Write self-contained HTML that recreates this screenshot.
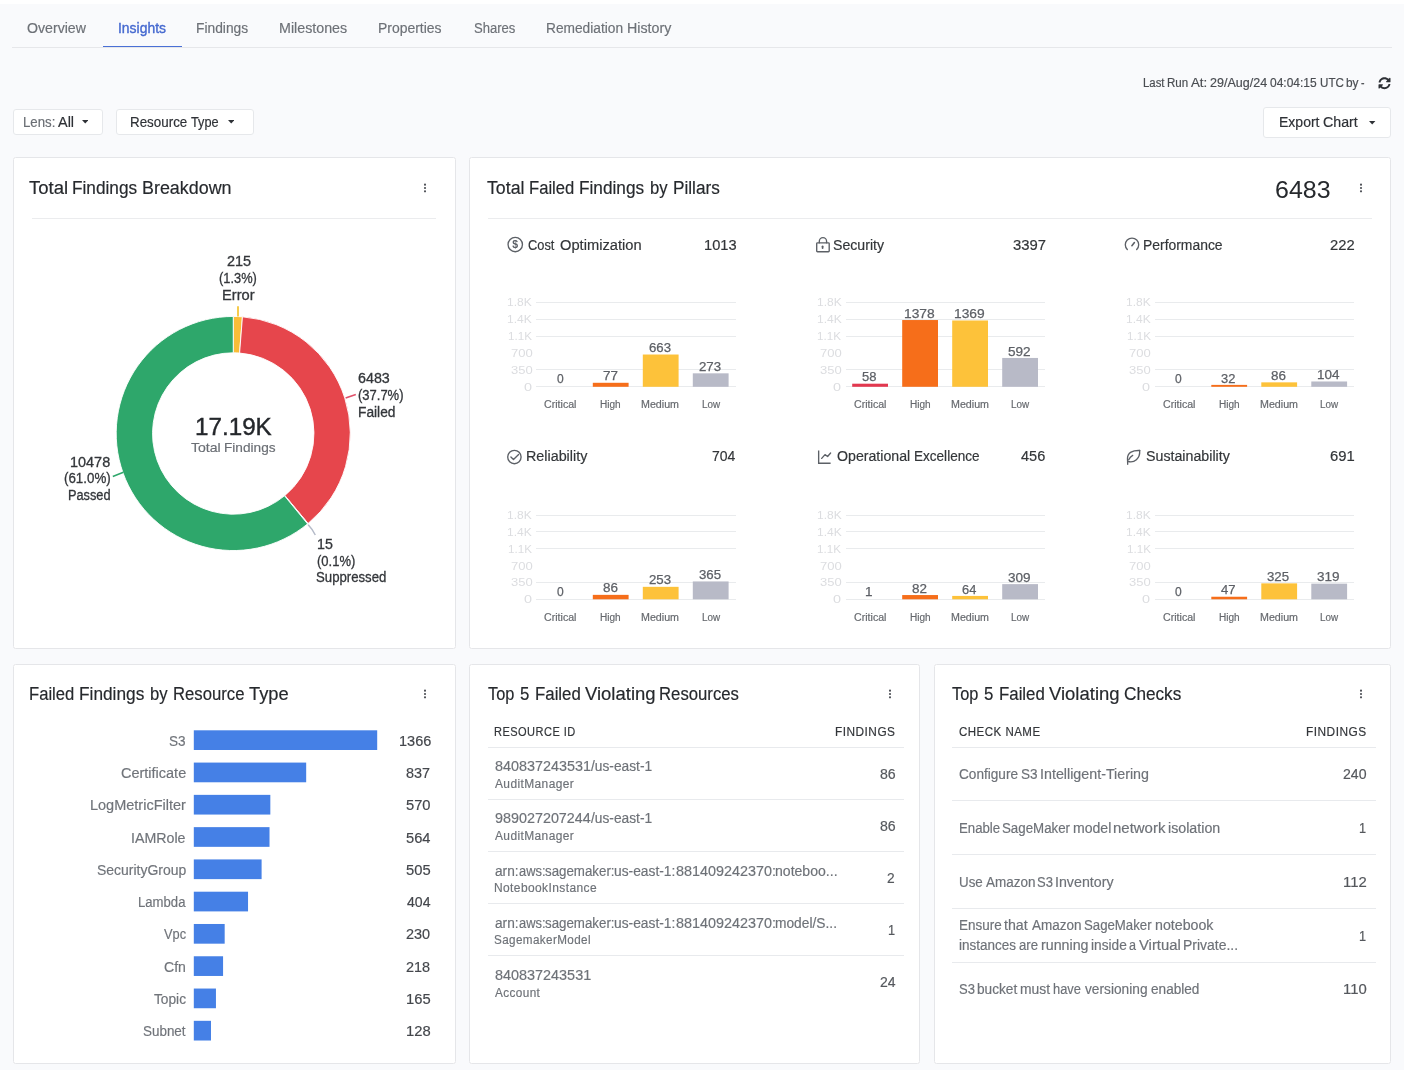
<!DOCTYPE html><html><head><meta charset="utf-8"><title>Insights</title><style>
html,body{margin:0;padding:0}
body{width:1408px;height:1070px;position:relative;overflow:hidden;background:#f9fafc;font-family:"Liberation Sans", sans-serif;}
#w{position:absolute;left:0;top:0;width:1408px;height:1070px;will-change:transform}
#w>div,#w>svg,#w>span{position:absolute;display:block}
span{white-space:pre;line-height:1}
</style></head><body><div id="w">
<div style="left:0.00px;top:0.00px;width:1408.00px;height:4.00px;background:#ffffff;"></div>
<div style="left:1404.00px;top:0.00px;width:4.00px;height:1070.00px;background:#ffffff;"></div>
<div style="left:12.00px;top:47.00px;width:1380.00px;height:1.00px;background:#e6e7ea;"></div>
<div style="left:102.60px;top:45.60px;width:79.40px;height:1.50px;background:#4a70d6;"></div>
<svg style="left:1378.3px;top:77.3px" width="13" height="12.4" viewBox="0 0 512 512"><path fill="#2e3136" d="M370.72 133.28C339.458 104.008 298.888 87.962 255.848 88c-77.458.068-144.328 53.178-162.791 126.85-1.344 5.363-6.122 9.15-11.651 9.15H24.103c-7.498 0-13.194-6.807-11.807-14.176C33.933 94.924 134.813 8 256 8c66.448 0 126.791 26.136 171.315 68.685L463.03 40.97C478.149 25.851 504 36.559 504 57.941V192c0 13.255-10.745 24-24 24H345.941c-21.382 0-32.09-25.851-16.971-40.971l41.75-41.749zM32 296h134.059c21.382 0 32.09 25.851 16.971 40.971l-41.75 41.75c31.262 29.273 71.835 45.319 114.876 45.28 77.418-.07 144.315-53.144 162.787-126.849 1.344-5.363 6.122-9.15 11.651-9.15h57.304c7.498 0 13.194 6.807 11.807 14.176C478.067 417.076 377.187 504 256 504c-66.448 0-126.791-26.136-171.315-68.685L48.97 471.03C33.851 486.149 8 475.441 8 454.059V320c0-13.255 10.745-24 24-24z"/></svg>
<div style="left:13.20px;top:108.50px;width:90.20px;height:26.00px;background:#fff;border:1px solid #e6e8eb;border-radius:3px;box-sizing:border-box;"></div>
<div style="left:115.70px;top:108.50px;width:138.50px;height:26.00px;background:#fff;border:1px solid #e6e8eb;border-radius:3px;box-sizing:border-box;"></div>
<div style="left:1263.30px;top:107.30px;width:127.50px;height:30.40px;background:#fff;border:1px solid #e6e8eb;border-radius:3px;box-sizing:border-box;"></div>
<svg style="left:82.10px;top:120.30px" width="6.4" height="3.6" viewBox="0 0 6.4 3.6"><path d="M0 0H6.4L3.2 3.6Z" fill="#2e3136"/></svg>
<svg style="left:228.10px;top:120.30px" width="6.4" height="3.6" viewBox="0 0 6.4 3.6"><path d="M0 0H6.4L3.2 3.6Z" fill="#2e3136"/></svg>
<svg style="left:1369.40px;top:121.10px" width="6.4" height="3.6" viewBox="0 0 6.4 3.6"><path d="M0 0H6.4L3.2 3.6Z" fill="#2e3136"/></svg>
<div style="left:13.00px;top:157.00px;width:443.00px;height:492.00px;background:#fff;border:1px solid #e5e6e9;border-radius:2.5px;box-sizing:border-box;"></div>
<div style="left:469.00px;top:157.00px;width:922.00px;height:492.00px;background:#fff;border:1px solid #e5e6e9;border-radius:2.5px;box-sizing:border-box;"></div>
<div style="left:13.00px;top:664.00px;width:443.00px;height:400.00px;background:#fff;border:1px solid #e5e6e9;border-radius:2.5px;box-sizing:border-box;"></div>
<div style="left:469.00px;top:664.00px;width:451.00px;height:400.00px;background:#fff;border:1px solid #e5e6e9;border-radius:2.5px;box-sizing:border-box;"></div>
<div style="left:934.00px;top:664.00px;width:457.00px;height:400.00px;background:#fff;border:1px solid #e5e6e9;border-radius:2.5px;box-sizing:border-box;"></div>
<svg style="left:422.00px;top:182.40px" width="6" height="12" viewBox="0 0 6 12"><circle cx="3" cy="2.7" r="1.08" fill="#4d5056"/><circle cx="3" cy="6" r="1.08" fill="#4d5056"/><circle cx="3" cy="9.3" r="1.08" fill="#4d5056"/></svg>
<svg style="left:1358.20px;top:182.40px" width="6" height="12" viewBox="0 0 6 12"><circle cx="3" cy="2.7" r="1.08" fill="#4d5056"/><circle cx="3" cy="6" r="1.08" fill="#4d5056"/><circle cx="3" cy="9.3" r="1.08" fill="#4d5056"/></svg>
<svg style="left:422.00px;top:688.30px" width="6" height="12" viewBox="0 0 6 12"><circle cx="3" cy="2.7" r="1.08" fill="#4d5056"/><circle cx="3" cy="6" r="1.08" fill="#4d5056"/><circle cx="3" cy="9.3" r="1.08" fill="#4d5056"/></svg>
<svg style="left:886.50px;top:688.30px" width="6" height="12" viewBox="0 0 6 12"><circle cx="3" cy="2.7" r="1.08" fill="#4d5056"/><circle cx="3" cy="6" r="1.08" fill="#4d5056"/><circle cx="3" cy="9.3" r="1.08" fill="#4d5056"/></svg>
<svg style="left:1357.80px;top:688.30px" width="6" height="12" viewBox="0 0 6 12"><circle cx="3" cy="2.7" r="1.08" fill="#4d5056"/><circle cx="3" cy="6" r="1.08" fill="#4d5056"/><circle cx="3" cy="9.3" r="1.08" fill="#4d5056"/></svg>
<div style="left:32.00px;top:218.00px;width:404.00px;height:1.00px;background:#ebecee;"></div>
<div style="left:488.00px;top:218.00px;width:884.00px;height:1.00px;background:#ebecee;"></div>
<svg style="left:0;top:0" width="470" height="660" viewBox="0 0 470 660"><path d="M233.25 316.45A117.05 117.05 0 0 1 242.44 316.81L239.58 353.05A80.7 80.7 0 0 0 233.25 352.80Z" fill="#f9bd38" stroke="#fff" stroke-width="0.9" stroke-linejoin="round"/><path d="M242.44 316.81A117.05 117.05 0 0 1 308.07 523.51L284.84 495.56A80.7 80.7 0 0 0 239.58 353.05Z" fill="#e6464c" stroke="#fff" stroke-width="0.9" stroke-linejoin="round"/><path d="M308.07 523.51A117.05 117.05 0 0 1 307.58 523.92L284.50 495.84A80.7 80.7 0 0 0 284.84 495.56Z" fill="#a9b4c9" stroke="#fff" stroke-width="0.9" stroke-linejoin="round"/><path d="M307.58 523.92A117.05 117.05 0 1 1 233.25 316.45L233.25 352.80A80.7 80.7 0 1 0 284.50 495.84Z" fill="#2ea76b" stroke="#fff" stroke-width="0.9" stroke-linejoin="round"/><path d="M238 316.6V306.2" stroke="#f6c944" stroke-width="1.9" fill="none"/><path d="M345.6 398.1L355.8 394.4" stroke="#e0506a" stroke-width="1.6" fill="none"/><path d="M123.4 472.3L112.8 476.6" stroke="#2ea76b" stroke-width="1.6" fill="none"/><path d="M308.2 524.7Q311.8 528.3 315.3 535" stroke="#b4bac8" stroke-width="1.5" fill="none"/></svg>
<div style="left:536.20px;top:301.90px;width:199.50px;height:1.00px;background:#e9ebed;"></div>
<div style="left:536.20px;top:318.78px;width:199.50px;height:1.00px;background:#e9ebed;"></div>
<div style="left:536.20px;top:335.66px;width:199.50px;height:1.00px;background:#e9ebed;"></div>
<div style="left:536.20px;top:369.42px;width:199.50px;height:1.00px;background:#e9ebed;"></div>
<div style="left:536.20px;top:386.30px;width:199.50px;height:1.00px;background:#e9ebed;"></div>
<div style="left:845.60px;top:301.90px;width:199.50px;height:1.00px;background:#e9ebed;"></div>
<div style="left:845.60px;top:318.78px;width:199.50px;height:1.00px;background:#e9ebed;"></div>
<div style="left:845.60px;top:335.66px;width:199.50px;height:1.00px;background:#e9ebed;"></div>
<div style="left:845.60px;top:369.42px;width:199.50px;height:1.00px;background:#e9ebed;"></div>
<div style="left:845.60px;top:386.30px;width:199.50px;height:1.00px;background:#e9ebed;"></div>
<div style="left:1154.70px;top:301.90px;width:199.50px;height:1.00px;background:#e9ebed;"></div>
<div style="left:1154.70px;top:318.78px;width:199.50px;height:1.00px;background:#e9ebed;"></div>
<div style="left:1154.70px;top:335.66px;width:199.50px;height:1.00px;background:#e9ebed;"></div>
<div style="left:1154.70px;top:369.42px;width:199.50px;height:1.00px;background:#e9ebed;"></div>
<div style="left:1154.70px;top:386.30px;width:199.50px;height:1.00px;background:#e9ebed;"></div>
<div style="left:536.20px;top:514.60px;width:199.50px;height:1.00px;background:#e9ebed;"></div>
<div style="left:536.20px;top:531.44px;width:199.50px;height:1.00px;background:#e9ebed;"></div>
<div style="left:536.20px;top:548.28px;width:199.50px;height:1.00px;background:#e9ebed;"></div>
<div style="left:536.20px;top:581.96px;width:199.50px;height:1.00px;background:#e9ebed;"></div>
<div style="left:536.20px;top:598.80px;width:199.50px;height:1.00px;background:#e9ebed;"></div>
<div style="left:845.60px;top:514.60px;width:199.50px;height:1.00px;background:#e9ebed;"></div>
<div style="left:845.60px;top:531.44px;width:199.50px;height:1.00px;background:#e9ebed;"></div>
<div style="left:845.60px;top:548.28px;width:199.50px;height:1.00px;background:#e9ebed;"></div>
<div style="left:845.60px;top:581.96px;width:199.50px;height:1.00px;background:#e9ebed;"></div>
<div style="left:845.60px;top:598.80px;width:199.50px;height:1.00px;background:#e9ebed;"></div>
<div style="left:1154.70px;top:514.60px;width:199.50px;height:1.00px;background:#e9ebed;"></div>
<div style="left:1154.70px;top:531.44px;width:199.50px;height:1.00px;background:#e9ebed;"></div>
<div style="left:1154.70px;top:548.28px;width:199.50px;height:1.00px;background:#e9ebed;"></div>
<div style="left:1154.70px;top:581.96px;width:199.50px;height:1.00px;background:#e9ebed;"></div>
<div style="left:1154.70px;top:598.80px;width:199.50px;height:1.00px;background:#e9ebed;"></div>
<div style="left:487.70px;top:746.60px;width:416.50px;height:1.20px;background:#e8eaed;"></div>
<div style="left:487.70px;top:798.70px;width:416.50px;height:1.20px;background:#e8eaed;"></div>
<div style="left:487.70px;top:850.80px;width:416.50px;height:1.20px;background:#e8eaed;"></div>
<div style="left:487.70px;top:902.80px;width:416.50px;height:1.20px;background:#e8eaed;"></div>
<div style="left:487.70px;top:954.90px;width:416.50px;height:1.20px;background:#e8eaed;"></div>
<div style="left:951.70px;top:746.90px;width:424.00px;height:1.20px;background:#e8eaed;"></div>
<div style="left:951.70px;top:800.10px;width:424.00px;height:1.20px;background:#e8eaed;"></div>
<div style="left:951.70px;top:854.00px;width:424.00px;height:1.20px;background:#e8eaed;"></div>
<div style="left:951.70px;top:907.80px;width:424.00px;height:1.20px;background:#e8eaed;"></div>
<div style="left:951.70px;top:961.60px;width:424.00px;height:1.20px;background:#e8eaed;"></div>
<svg style="left:0;top:0" width="1408" height="1070" viewBox="0 0 1408 1070"><rect x="592.80" y="382.79" width="35.80" height="4.01" fill="#f66e1a"/><rect x="642.80" y="354.52" width="35.80" height="32.28" fill="#fdc23a"/><rect x="692.80" y="373.33" width="35.80" height="13.47" fill="#b8bac7"/><rect x="852.20" y="383.70" width="35.80" height="3.10" fill="#e2384f"/><rect x="902.20" y="320.04" width="35.80" height="66.76" fill="#f66e1a"/><rect x="952.20" y="320.48" width="35.80" height="66.32" fill="#fdc23a"/><rect x="1002.20" y="357.95" width="35.80" height="28.85" fill="#b8bac7"/><rect x="1211.30" y="384.90" width="35.80" height="1.90" fill="#f66e1a"/><rect x="1261.30" y="382.35" width="35.80" height="4.45" fill="#fdc23a"/><rect x="1311.30" y="381.48" width="35.80" height="5.32" fill="#b8bac7"/><rect x="592.80" y="594.86" width="35.80" height="4.44" fill="#f66e1a"/><rect x="642.80" y="586.83" width="35.80" height="12.47" fill="#fdc23a"/><rect x="692.80" y="581.44" width="35.80" height="17.86" fill="#b8bac7"/><rect x="902.20" y="595.05" width="35.80" height="4.25" fill="#f66e1a"/><rect x="952.20" y="595.92" width="35.80" height="3.38" fill="#fdc23a"/><rect x="1002.20" y="584.13" width="35.80" height="15.17" fill="#b8bac7"/><rect x="1211.30" y="596.74" width="35.80" height="2.56" fill="#f66e1a"/><rect x="1261.30" y="583.36" width="35.80" height="15.94" fill="#fdc23a"/><rect x="1311.30" y="583.65" width="35.80" height="15.65" fill="#b8bac7"/><rect x="193.80" y="730.30" width="183.40" height="19.70" fill="#4580e6"/><rect x="193.80" y="762.58" width="112.38" height="19.70" fill="#4580e6"/><rect x="193.80" y="794.86" width="76.53" height="19.70" fill="#4580e6"/><rect x="193.80" y="827.14" width="75.72" height="19.70" fill="#4580e6"/><rect x="193.80" y="859.42" width="67.80" height="19.70" fill="#4580e6"/><rect x="193.80" y="891.70" width="54.24" height="19.70" fill="#4580e6"/><rect x="193.80" y="923.98" width="30.88" height="19.70" fill="#4580e6"/><rect x="193.80" y="956.26" width="29.27" height="19.70" fill="#4580e6"/><rect x="193.80" y="988.54" width="22.15" height="19.70" fill="#4580e6"/><rect x="193.80" y="1020.82" width="17.19" height="19.70" fill="#4580e6"/></svg>
<svg style="left:0;top:0" width="1408" height="1070" viewBox="0 0 1408 1070" fill="none" stroke="#5c6066" stroke-width="1.35" stroke-linecap="round" stroke-linejoin="round"><circle cx="515.25" cy="244.5" r="7.2"/><text x="515.25" y="248.1" text-anchor="middle" font-family='"Liberation Sans", sans-serif' font-size="10.5" font-weight="700" fill="#5c6066" stroke="none">$</text><rect x="816.7" y="242.8" width="12.5" height="8.9" rx="0.8"/><path d="M819.3 242.8V241.2a3.65 3.65 0 0 1 7.3 0V242.8"/><rect x="821.7" y="245.4" width="1.8" height="3.5" rx="0.9" fill="#5c6066" stroke="none"/><path d="M1127.3 249.6A6.7 6.7 0 1 1 1136.7 249.6"/><path d="M1131.9 245.7L1134.4 242.6" stroke-width="1.6"/><circle cx="514.4" cy="457.05" r="6.7"/><path d="M510.9 456.9L513.5 459.5L518.6 454.4"/><path d="M818.65 450.6V463.2H830.6" stroke-linecap="butt" stroke-linejoin="miter"/><path d="M821.7 458.4L825 454.6L827.6 456.5L830.6 453"/><path d="M1139.7 450.5C1133 450.2 1127.3 452.2 1127.5 458.6L1127.7 464.3"/><path d="M1128.2 461.5C1134.2 463 1140.2 459 1139.7 450.5"/><path d="M1128.7 459.7C1129.7 457.6 1131 456.3 1132.7 455.4"/></svg>
<span style="font-size:14px;color:#6d7177;-webkit-text-stroke:0.18px #6d7177;left:27.19px;top:21.00px;transform:scaleX(1.0098);transform-origin:0 0;">Overview</span>
<span style="font-size:14px;color:#4468cf;-webkit-text-stroke:0.35px #4468cf;left:117.74px;top:21.00px;transform:scaleX(0.9942);transform-origin:0 0;">Insights</span>
<span style="font-size:14px;color:#6d7177;-webkit-text-stroke:0.18px #6d7177;left:196.49px;top:21.00px;transform:scaleX(0.9850);transform-origin:0 0;">Findings</span>
<span style="font-size:14px;color:#6d7177;-webkit-text-stroke:0.18px #6d7177;left:279.49px;top:21.00px;transform:scaleX(1.0187);transform-origin:0 0;">Milestones</span>
<span style="font-size:14px;color:#6d7177;-webkit-text-stroke:0.18px #6d7177;left:378.00px;top:21.00px;transform:scaleX(0.9960);transform-origin:0 0;">Properties</span>
<span style="font-size:14px;color:#6d7177;-webkit-text-stroke:0.18px #6d7177;left:473.50px;top:21.00px;transform:scaleX(0.9331);transform-origin:0 0;">Shares</span>
<span style="font-size:14px;color:#6d7177;-webkit-text-stroke:0.18px #6d7177;left:545.80px;top:21.00px;transform:scaleX(0.9807);transform-origin:0 0;">Remediation</span>
<span style="font-size:14px;color:#6d7177;-webkit-text-stroke:0.18px #6d7177;left:626.50px;top:21.00px;transform:scaleX(1.0155);transform-origin:0 0;">History</span>
<span style="font-size:12px;color:#4a4d52;-webkit-text-stroke:0.18px #4a4d52;left:1142.50px;top:77.00px;transform:scaleX(0.9472);transform-origin:0 0;">Last</span>
<span style="font-size:12px;color:#4a4d52;-webkit-text-stroke:0.18px #4a4d52;left:1166.92px;top:77.00px;transform:scaleX(0.9622);transform-origin:0 0;">Run</span>
<span style="font-size:12px;color:#4a4d52;-webkit-text-stroke:0.18px #4a4d52;left:1191.17px;top:77.00px;transform:scaleX(1.1059);transform-origin:0 0;">At:</span>
<span style="font-size:12px;color:#4a4d52;-webkit-text-stroke:0.18px #4a4d52;left:1209.73px;top:77.00px;transform:scaleX(1.0434);transform-origin:0 0;">29/Aug/24</span>
<span style="font-size:12px;color:#4a4d52;-webkit-text-stroke:0.18px #4a4d52;left:1269.81px;top:77.00px;transform:scaleX(0.9976);transform-origin:0 0;">04:04:15</span>
<span style="font-size:12px;color:#4a4d52;-webkit-text-stroke:0.18px #4a4d52;left:1319.50px;top:77.00px;transform:scaleX(0.9671);transform-origin:0 0;">UTC</span>
<span style="font-size:12px;color:#4a4d52;-webkit-text-stroke:0.18px #4a4d52;left:1345.94px;top:77.00px;transform:scaleX(0.9871);transform-origin:0 0;">by</span>
<span style="font-size:12px;color:#4a4d52;-webkit-text-stroke:0.18px #4a4d52;left:1361.34px;top:77.00px;transform:scaleX(0.8754);transform-origin:0 0;">-</span>
<span style="font-size:14px;color:#6a6e74;-webkit-text-stroke:0.18px #6a6e74;left:22.76px;top:115.00px;transform:scaleX(0.9439);transform-origin:0 0;">Lens:</span>
<span style="font-size:14px;color:#2e3136;-webkit-text-stroke:0.18px #2e3136;left:58.22px;top:115.00px;transform:scaleX(1.0329);transform-origin:0 0;">All</span>
<span style="font-size:14px;color:#2e3136;-webkit-text-stroke:0.18px #2e3136;left:130.00px;top:115.00px;transform:scaleX(0.9564);transform-origin:0 0;">Resource</span>
<span style="font-size:14px;color:#2e3136;-webkit-text-stroke:0.18px #2e3136;left:191.18px;top:115.00px;transform:scaleX(0.9086);transform-origin:0 0;">Type</span>
<span style="font-size:14px;color:#2e3136;-webkit-text-stroke:0.18px #2e3136;left:1278.80px;top:115.00px;transform:scaleX(1.0013);transform-origin:0 0;">Export</span>
<span style="font-size:14px;color:#2e3136;-webkit-text-stroke:0.18px #2e3136;left:1323.06px;top:115.00px;transform:scaleX(1.0148);transform-origin:0 0;">Chart</span>
<span style="font-size:18px;color:#26292d;-webkit-text-stroke:0.18px #26292d;left:29.36px;top:179.00px;transform:scaleX(1.0297);transform-origin:0 0;">Total</span>
<span style="font-size:18px;color:#26292d;-webkit-text-stroke:0.18px #26292d;left:72.15px;top:179.00px;transform:scaleX(0.9563);transform-origin:0 0;">Findings</span>
<span style="font-size:18px;color:#26292d;-webkit-text-stroke:0.18px #26292d;left:141.73px;top:179.00px;transform:scaleX(0.9945);transform-origin:0 0;">Breakdown</span>
<span style="font-size:18px;color:#26292d;-webkit-text-stroke:0.18px #26292d;left:487.46px;top:179.00px;transform:scaleX(0.9860);transform-origin:0 0;">Total</span>
<span style="font-size:18px;color:#26292d;-webkit-text-stroke:0.18px #26292d;left:528.98px;top:179.00px;transform:scaleX(0.9224);transform-origin:0 0;">Failed</span>
<span style="font-size:18px;color:#26292d;-webkit-text-stroke:0.18px #26292d;left:579.25px;top:179.00px;transform:scaleX(0.9563);transform-origin:0 0;">Findings</span>
<span style="font-size:18px;color:#26292d;-webkit-text-stroke:0.18px #26292d;left:649.60px;top:179.00px;transform:scaleX(0.9262);transform-origin:0 0;">by</span>
<span style="font-size:18px;color:#26292d;-webkit-text-stroke:0.18px #26292d;left:672.75px;top:179.00px;transform:scaleX(0.9546);transform-origin:0 0;">Pillars</span>
<span style="font-size:24px;color:#26292d;left:1275.08px;top:178.00px;transform:scaleX(1.0396);transform-origin:0 0;">6483</span>
<span style="font-size:18px;color:#26292d;-webkit-text-stroke:0.18px #26292d;left:29.18px;top:685.00px;transform:scaleX(0.9224);transform-origin:0 0;">Failed</span>
<span style="font-size:18px;color:#26292d;-webkit-text-stroke:0.18px #26292d;left:79.45px;top:685.00px;transform:scaleX(0.9592);transform-origin:0 0;">Findings</span>
<span style="font-size:18px;color:#26292d;-webkit-text-stroke:0.18px #26292d;left:149.80px;top:685.00px;transform:scaleX(0.9262);transform-origin:0 0;">by</span>
<span style="font-size:18px;color:#26292d;-webkit-text-stroke:0.18px #26292d;left:172.98px;top:685.00px;transform:scaleX(0.9272);transform-origin:0 0;">Resource</span>
<span style="font-size:18px;color:#26292d;-webkit-text-stroke:0.18px #26292d;left:248.56px;top:685.00px;transform:scaleX(1.0179);transform-origin:0 0;">Type</span>
<span style="font-size:18px;color:#26292d;-webkit-text-stroke:0.18px #26292d;left:487.88px;top:685.00px;transform:scaleX(0.9076);transform-origin:0 0;">Top</span>
<span style="font-size:18px;color:#26292d;-webkit-text-stroke:0.18px #26292d;left:519.78px;top:685.00px;transform:scaleX(0.9336);transform-origin:0 0;">5</span>
<span style="font-size:18px;color:#26292d;-webkit-text-stroke:0.18px #26292d;left:534.57px;top:685.00px;transform:scaleX(0.9343);transform-origin:0 0;">Failed</span>
<span style="font-size:18px;color:#26292d;-webkit-text-stroke:0.18px #26292d;left:584.94px;top:685.00px;transform:scaleX(1.0263);transform-origin:0 0;">Violating</span>
<span style="font-size:18px;color:#26292d;-webkit-text-stroke:0.18px #26292d;left:659.48px;top:685.00px;transform:scaleX(0.9291);transform-origin:0 0;">Resources</span>
<span style="font-size:18px;color:#26292d;-webkit-text-stroke:0.18px #26292d;left:952.18px;top:685.00px;transform:scaleX(0.9076);transform-origin:0 0;">Top</span>
<span style="font-size:18px;color:#26292d;-webkit-text-stroke:0.18px #26292d;left:984.08px;top:685.00px;transform:scaleX(0.9336);transform-origin:0 0;">5</span>
<span style="font-size:18px;color:#26292d;-webkit-text-stroke:0.18px #26292d;left:998.87px;top:685.00px;transform:scaleX(0.9343);transform-origin:0 0;">Failed</span>
<span style="font-size:18px;color:#26292d;-webkit-text-stroke:0.18px #26292d;left:1049.24px;top:685.00px;transform:scaleX(1.0263);transform-origin:0 0;">Violating</span>
<span style="font-size:18px;color:#26292d;-webkit-text-stroke:0.18px #26292d;left:1123.89px;top:685.00px;transform:scaleX(0.9544);transform-origin:0 0;">Checks</span>
<span style="font-size:14px;color:#33363a;-webkit-text-stroke:0.3px #33363a;left:226.77px;top:254.00px;transform:scaleX(1.0321);transform-origin:0 0;">215</span>
<span style="font-size:14px;color:#33363a;-webkit-text-stroke:0.3px #33363a;left:219.39px;top:271.00px;transform:scaleX(0.9172);transform-origin:0 0;">(1.3%)</span>
<span style="font-size:14px;color:#33363a;-webkit-text-stroke:0.3px #33363a;left:221.81px;top:288.00px;transform:scaleX(1.0476);transform-origin:0 0;">Error</span>
<span style="font-size:14px;color:#33363a;-webkit-text-stroke:0.3px #33363a;left:358.23px;top:371.00px;transform:scaleX(1.0201);transform-origin:0 0;">6483</span>
<span style="font-size:14px;color:#33363a;-webkit-text-stroke:0.3px #33363a;left:358.38px;top:388.00px;transform:scaleX(0.9280);transform-origin:0 0;">(37.7%)</span>
<span style="font-size:14px;color:#33363a;-webkit-text-stroke:0.3px #33363a;left:357.90px;top:405.00px;transform:scaleX(0.9811);transform-origin:0 0;">Failed</span>
<span style="font-size:14px;color:#33363a;-webkit-text-stroke:0.3px #33363a;left:69.99px;top:455.00px;transform:scaleX(1.0322);transform-origin:0 0;">10478</span>
<span style="font-size:14px;color:#33363a;-webkit-text-stroke:0.3px #33363a;left:63.67px;top:471.00px;transform:scaleX(0.9520);transform-origin:0 0;">(61.0%)</span>
<span style="font-size:14px;color:#33363a;-webkit-text-stroke:0.3px #33363a;left:67.50px;top:488.00px;transform:scaleX(0.9113);transform-origin:0 0;">Passed</span>
<span style="font-size:14px;color:#33363a;-webkit-text-stroke:0.3px #33363a;left:316.89px;top:537.00px;transform:scaleX(1.0143);transform-origin:0 0;">15</span>
<span style="font-size:14px;color:#33363a;-webkit-text-stroke:0.3px #33363a;left:316.59px;top:554.00px;transform:scaleX(0.9287);transform-origin:0 0;">(0.1%)</span>
<span style="font-size:14px;color:#33363a;-webkit-text-stroke:0.3px #33363a;left:316.45px;top:570.00px;transform:scaleX(0.9420);transform-origin:0 0;">Suppressed</span>
<span style="font-size:24px;color:#24272b;-webkit-text-stroke:0.4px #24272b;left:194.91px;top:415.00px;transform:scaleX(1.0092);transform-origin:0 0;">17.19K</span>
<span style="font-size:13.3px;color:#6a6e74;-webkit-text-stroke:0.18px #6a6e74;left:191.22px;top:441.00px;transform:scaleX(1.0562);transform-origin:0 0;">Total</span>
<span style="font-size:13.3px;color:#6a6e74;-webkit-text-stroke:0.18px #6a6e74;left:223.61px;top:441.00px;transform:scaleX(1.0261);transform-origin:0 0;">Findings</span>
<span style="font-size:14px;color:#333639;-webkit-text-stroke:0.18px #333639;left:528.44px;top:238.00px;transform:scaleX(0.9151);transform-origin:0 0;">Cost</span>
<span style="font-size:14px;color:#333639;-webkit-text-stroke:0.18px #333639;left:559.68px;top:238.00px;transform:scaleX(1.0482);transform-origin:0 0;">Optimization</span>
<span style="font-size:14px;color:#333639;-webkit-text-stroke:0.18px #333639;left:703.50px;top:238.00px;transform:scaleX(1.0463);transform-origin:0 0;">1013</span>
<span style="font-size:11.5px;color:#dcdde0;left:507.24px;top:297.00px;transform:scaleX(1.0444);transform-origin:0 0;">1.8K</span>
<span style="font-size:11.5px;color:#dcdde0;left:507.24px;top:314.00px;transform:scaleX(1.0444);transform-origin:0 0;">1.4K</span>
<span style="font-size:11.5px;color:#dcdde0;left:508.03px;top:331.00px;transform:scaleX(1.0108);transform-origin:0 0;">1.1K</span>
<span style="font-size:11.5px;color:#dcdde0;left:510.56px;top:348.00px;transform:scaleX(1.1337);transform-origin:0 0;">700</span>
<span style="font-size:11.5px;color:#dcdde0;left:510.65px;top:365.00px;transform:scaleX(1.1276);transform-origin:0 0;">350</span>
<span style="font-size:11.5px;color:#dcdde0;left:523.97px;top:382.00px;transform:scaleX(1.2527);transform-origin:0 0;">0</span>
<span style="font-size:13px;color:#5d6066;-webkit-text-stroke:0.25px #5d6066;left:556.63px;top:372.00px;transform:scaleX(0.9249);transform-origin:0 0;">0</span>
<span style="font-size:10px;color:#66696e;-webkit-text-stroke:0.18px #66696e;left:544.47px;top:400.00px;transform:scaleX(1.0625);transform-origin:0 0;">Critical</span>
<span style="font-size:13px;color:#5d6066;-webkit-text-stroke:0.25px #5d6066;left:602.78px;top:369.00px;transform:scaleX(1.0304);transform-origin:0 0;">77</span>
<span style="font-size:10px;color:#66696e;-webkit-text-stroke:0.18px #66696e;left:600.32px;top:400.00px;transform:scaleX(1.0044);transform-origin:0 0;">High</span>
<span style="font-size:13px;color:#5d6066;-webkit-text-stroke:0.25px #5d6066;left:648.93px;top:341.00px;transform:scaleX(1.0154);transform-origin:0 0;">663</span>
<span style="font-size:10px;color:#66696e;-webkit-text-stroke:0.18px #66696e;left:641.44px;top:400.00px;transform:scaleX(1.0689);transform-origin:0 0;">Medium</span>
<span style="font-size:13px;color:#5d6066;-webkit-text-stroke:0.25px #5d6066;left:698.94px;top:360.00px;transform:scaleX(1.0200);transform-origin:0 0;">273</span>
<span style="font-size:10px;color:#66696e;-webkit-text-stroke:0.18px #66696e;left:701.58px;top:400.00px;transform:scaleX(0.9867);transform-origin:0 0;">Low</span>
<span style="font-size:14px;color:#333639;-webkit-text-stroke:0.18px #333639;left:832.75px;top:238.00px;transform:scaleX(1.0086);transform-origin:0 0;">Security</span>
<span style="font-size:14px;color:#333639;-webkit-text-stroke:0.18px #333639;left:1012.72px;top:238.00px;transform:scaleX(1.0601);transform-origin:0 0;">3397</span>
<span style="font-size:11.5px;color:#dcdde0;left:816.64px;top:297.00px;transform:scaleX(1.0444);transform-origin:0 0;">1.8K</span>
<span style="font-size:11.5px;color:#dcdde0;left:816.64px;top:314.00px;transform:scaleX(1.0444);transform-origin:0 0;">1.4K</span>
<span style="font-size:11.5px;color:#dcdde0;left:817.43px;top:331.00px;transform:scaleX(1.0108);transform-origin:0 0;">1.1K</span>
<span style="font-size:11.5px;color:#dcdde0;left:819.96px;top:348.00px;transform:scaleX(1.1337);transform-origin:0 0;">700</span>
<span style="font-size:11.5px;color:#dcdde0;left:820.05px;top:365.00px;transform:scaleX(1.1276);transform-origin:0 0;">350</span>
<span style="font-size:11.5px;color:#dcdde0;left:833.37px;top:382.00px;transform:scaleX(1.2527);transform-origin:0 0;">0</span>
<span style="font-size:13px;color:#5d6066;-webkit-text-stroke:0.25px #5d6066;left:862.06px;top:370.00px;transform:scaleX(0.9985);transform-origin:0 0;">58</span>
<span style="font-size:10px;color:#66696e;-webkit-text-stroke:0.18px #66696e;left:853.87px;top:400.00px;transform:scaleX(1.0625);transform-origin:0 0;">Critical</span>
<span style="font-size:13px;color:#5d6066;-webkit-text-stroke:0.25px #5d6066;left:903.79px;top:307.00px;transform:scaleX(1.0608);transform-origin:0 0;">1378</span>
<span style="font-size:10px;color:#66696e;-webkit-text-stroke:0.18px #66696e;left:909.72px;top:400.00px;transform:scaleX(1.0044);transform-origin:0 0;">High</span>
<span style="font-size:13px;color:#5d6066;-webkit-text-stroke:0.25px #5d6066;left:953.79px;top:307.00px;transform:scaleX(1.0628);transform-origin:0 0;">1369</span>
<span style="font-size:10px;color:#66696e;-webkit-text-stroke:0.18px #66696e;left:950.84px;top:400.00px;transform:scaleX(1.0689);transform-origin:0 0;">Medium</span>
<span style="font-size:13px;color:#5d6066;-webkit-text-stroke:0.25px #5d6066;left:1008.23px;top:345.00px;transform:scaleX(1.0443);transform-origin:0 0;">592</span>
<span style="font-size:10px;color:#66696e;-webkit-text-stroke:0.18px #66696e;left:1010.98px;top:400.00px;transform:scaleX(0.9867);transform-origin:0 0;">Low</span>
<span style="font-size:14px;color:#333639;-webkit-text-stroke:0.18px #333639;left:1143.40px;top:238.00px;transform:scaleX(0.9933);transform-origin:0 0;">Performance</span>
<span style="font-size:14px;color:#333639;-webkit-text-stroke:0.18px #333639;left:1329.78px;top:238.00px;transform:scaleX(1.0553);transform-origin:0 0;">222</span>
<span style="font-size:11.5px;color:#dcdde0;left:1125.74px;top:297.00px;transform:scaleX(1.0444);transform-origin:0 0;">1.8K</span>
<span style="font-size:11.5px;color:#dcdde0;left:1125.74px;top:314.00px;transform:scaleX(1.0444);transform-origin:0 0;">1.4K</span>
<span style="font-size:11.5px;color:#dcdde0;left:1126.53px;top:331.00px;transform:scaleX(1.0108);transform-origin:0 0;">1.1K</span>
<span style="font-size:11.5px;color:#dcdde0;left:1129.06px;top:348.00px;transform:scaleX(1.1337);transform-origin:0 0;">700</span>
<span style="font-size:11.5px;color:#dcdde0;left:1129.15px;top:365.00px;transform:scaleX(1.1276);transform-origin:0 0;">350</span>
<span style="font-size:11.5px;color:#dcdde0;left:1142.47px;top:382.00px;transform:scaleX(1.2527);transform-origin:0 0;">0</span>
<span style="font-size:13px;color:#5d6066;-webkit-text-stroke:0.25px #5d6066;left:1175.13px;top:372.00px;transform:scaleX(0.9249);transform-origin:0 0;">0</span>
<span style="font-size:10px;color:#66696e;-webkit-text-stroke:0.18px #66696e;left:1162.97px;top:400.00px;transform:scaleX(1.0625);transform-origin:0 0;">Critical</span>
<span style="font-size:13px;color:#5d6066;-webkit-text-stroke:0.25px #5d6066;left:1221.19px;top:372.00px;transform:scaleX(0.9951);transform-origin:0 0;">32</span>
<span style="font-size:10px;color:#66696e;-webkit-text-stroke:0.18px #66696e;left:1218.82px;top:400.00px;transform:scaleX(1.0044);transform-origin:0 0;">High</span>
<span style="font-size:13px;color:#5d6066;-webkit-text-stroke:0.25px #5d6066;left:1271.27px;top:369.00px;transform:scaleX(1.0329);transform-origin:0 0;">86</span>
<span style="font-size:10px;color:#66696e;-webkit-text-stroke:0.18px #66696e;left:1259.94px;top:400.00px;transform:scaleX(1.0689);transform-origin:0 0;">Medium</span>
<span style="font-size:13px;color:#5d6066;-webkit-text-stroke:0.25px #5d6066;left:1316.70px;top:368.00px;transform:scaleX(1.0375);transform-origin:0 0;">104</span>
<span style="font-size:10px;color:#66696e;-webkit-text-stroke:0.18px #66696e;left:1320.08px;top:400.00px;transform:scaleX(0.9867);transform-origin:0 0;">Low</span>
<span style="font-size:14px;color:#333639;-webkit-text-stroke:0.18px #333639;left:525.99px;top:449.00px;transform:scaleX(1.0230);transform-origin:0 0;">Reliability</span>
<span style="font-size:14px;color:#333639;-webkit-text-stroke:0.18px #333639;left:712.19px;top:449.00px;transform:scaleX(0.9984);transform-origin:0 0;">704</span>
<span style="font-size:11.5px;color:#dcdde0;left:507.24px;top:510.00px;transform:scaleX(1.0444);transform-origin:0 0;">1.8K</span>
<span style="font-size:11.5px;color:#dcdde0;left:507.24px;top:527.00px;transform:scaleX(1.0444);transform-origin:0 0;">1.4K</span>
<span style="font-size:11.5px;color:#dcdde0;left:508.03px;top:544.00px;transform:scaleX(1.0108);transform-origin:0 0;">1.1K</span>
<span style="font-size:11.5px;color:#dcdde0;left:510.56px;top:561.00px;transform:scaleX(1.1337);transform-origin:0 0;">700</span>
<span style="font-size:11.5px;color:#dcdde0;left:510.65px;top:577.00px;transform:scaleX(1.1276);transform-origin:0 0;">350</span>
<span style="font-size:11.5px;color:#dcdde0;left:523.97px;top:594.00px;transform:scaleX(1.2527);transform-origin:0 0;">0</span>
<span style="font-size:13px;color:#5d6066;-webkit-text-stroke:0.25px #5d6066;left:556.63px;top:585.00px;transform:scaleX(0.9249);transform-origin:0 0;">0</span>
<span style="font-size:10px;color:#66696e;-webkit-text-stroke:0.18px #66696e;left:544.47px;top:613.00px;transform:scaleX(1.0625);transform-origin:0 0;">Critical</span>
<span style="font-size:13px;color:#5d6066;-webkit-text-stroke:0.25px #5d6066;left:602.77px;top:581.00px;transform:scaleX(1.0329);transform-origin:0 0;">86</span>
<span style="font-size:10px;color:#66696e;-webkit-text-stroke:0.18px #66696e;left:600.32px;top:613.00px;transform:scaleX(1.0044);transform-origin:0 0;">High</span>
<span style="font-size:13px;color:#5d6066;-webkit-text-stroke:0.25px #5d6066;left:648.94px;top:573.00px;transform:scaleX(1.0200);transform-origin:0 0;">253</span>
<span style="font-size:10px;color:#66696e;-webkit-text-stroke:0.18px #66696e;left:641.44px;top:613.00px;transform:scaleX(1.0689);transform-origin:0 0;">Medium</span>
<span style="font-size:13px;color:#5d6066;-webkit-text-stroke:0.25px #5d6066;left:698.88px;top:568.00px;transform:scaleX(1.0193);transform-origin:0 0;">365</span>
<span style="font-size:10px;color:#66696e;-webkit-text-stroke:0.18px #66696e;left:701.58px;top:613.00px;transform:scaleX(0.9867);transform-origin:0 0;">Low</span>
<span style="font-size:14px;color:#333639;-webkit-text-stroke:0.18px #333639;left:837.19px;top:449.00px;transform:scaleX(1.0119);transform-origin:0 0;">Operational</span>
<span style="font-size:14px;color:#333639;-webkit-text-stroke:0.18px #333639;left:913.51px;top:449.00px;transform:scaleX(0.9679);transform-origin:0 0;">Excellence</span>
<span style="font-size:14px;color:#333639;-webkit-text-stroke:0.18px #333639;left:1021.15px;top:449.00px;transform:scaleX(1.0392);transform-origin:0 0;">456</span>
<span style="font-size:11.5px;color:#dcdde0;left:816.64px;top:510.00px;transform:scaleX(1.0444);transform-origin:0 0;">1.8K</span>
<span style="font-size:11.5px;color:#dcdde0;left:816.64px;top:527.00px;transform:scaleX(1.0444);transform-origin:0 0;">1.4K</span>
<span style="font-size:11.5px;color:#dcdde0;left:817.43px;top:544.00px;transform:scaleX(1.0108);transform-origin:0 0;">1.1K</span>
<span style="font-size:11.5px;color:#dcdde0;left:819.96px;top:561.00px;transform:scaleX(1.1337);transform-origin:0 0;">700</span>
<span style="font-size:11.5px;color:#dcdde0;left:820.05px;top:577.00px;transform:scaleX(1.1276);transform-origin:0 0;">350</span>
<span style="font-size:11.5px;color:#dcdde0;left:833.37px;top:594.00px;transform:scaleX(1.2527);transform-origin:0 0;">0</span>
<span style="font-size:13px;color:#5d6066;-webkit-text-stroke:0.25px #5d6066;left:865.24px;top:585.00px;transform:scaleX(1.0419);transform-origin:0 0;">1</span>
<span style="font-size:10px;color:#66696e;-webkit-text-stroke:0.18px #66696e;left:853.87px;top:613.00px;transform:scaleX(1.0625);transform-origin:0 0;">Critical</span>
<span style="font-size:13px;color:#5d6066;-webkit-text-stroke:0.25px #5d6066;left:912.17px;top:582.00px;transform:scaleX(1.0329);transform-origin:0 0;">82</span>
<span style="font-size:10px;color:#66696e;-webkit-text-stroke:0.18px #66696e;left:909.72px;top:613.00px;transform:scaleX(1.0044);transform-origin:0 0;">High</span>
<span style="font-size:13px;color:#5d6066;-webkit-text-stroke:0.25px #5d6066;left:962.14px;top:583.00px;transform:scaleX(0.9875);transform-origin:0 0;">64</span>
<span style="font-size:10px;color:#66696e;-webkit-text-stroke:0.18px #66696e;left:950.84px;top:613.00px;transform:scaleX(1.0689);transform-origin:0 0;">Medium</span>
<span style="font-size:13px;color:#5d6066;-webkit-text-stroke:0.25px #5d6066;left:1008.28px;top:571.00px;transform:scaleX(1.0402);transform-origin:0 0;">309</span>
<span style="font-size:10px;color:#66696e;-webkit-text-stroke:0.18px #66696e;left:1010.98px;top:613.00px;transform:scaleX(0.9867);transform-origin:0 0;">Low</span>
<span style="font-size:14px;color:#333639;-webkit-text-stroke:0.18px #333639;left:1145.59px;top:449.00px;transform:scaleX(1.0159);transform-origin:0 0;">Sustainability</span>
<span style="font-size:14px;color:#333639;-webkit-text-stroke:0.18px #333639;left:1329.75px;top:449.00px;transform:scaleX(1.0565);transform-origin:0 0;">691</span>
<span style="font-size:11.5px;color:#dcdde0;left:1125.74px;top:510.00px;transform:scaleX(1.0444);transform-origin:0 0;">1.8K</span>
<span style="font-size:11.5px;color:#dcdde0;left:1125.74px;top:527.00px;transform:scaleX(1.0444);transform-origin:0 0;">1.4K</span>
<span style="font-size:11.5px;color:#dcdde0;left:1126.53px;top:544.00px;transform:scaleX(1.0108);transform-origin:0 0;">1.1K</span>
<span style="font-size:11.5px;color:#dcdde0;left:1129.06px;top:561.00px;transform:scaleX(1.1337);transform-origin:0 0;">700</span>
<span style="font-size:11.5px;color:#dcdde0;left:1129.15px;top:577.00px;transform:scaleX(1.1276);transform-origin:0 0;">350</span>
<span style="font-size:11.5px;color:#dcdde0;left:1142.47px;top:594.00px;transform:scaleX(1.2527);transform-origin:0 0;">0</span>
<span style="font-size:13px;color:#5d6066;-webkit-text-stroke:0.25px #5d6066;left:1175.13px;top:585.00px;transform:scaleX(0.9249);transform-origin:0 0;">0</span>
<span style="font-size:10px;color:#66696e;-webkit-text-stroke:0.18px #66696e;left:1162.97px;top:613.00px;transform:scaleX(1.0625);transform-origin:0 0;">Critical</span>
<span style="font-size:13px;color:#5d6066;-webkit-text-stroke:0.25px #5d6066;left:1221.47px;top:583.00px;transform:scaleX(1.0039);transform-origin:0 0;">47</span>
<span style="font-size:10px;color:#66696e;-webkit-text-stroke:0.18px #66696e;left:1218.82px;top:613.00px;transform:scaleX(1.0044);transform-origin:0 0;">High</span>
<span style="font-size:13px;color:#5d6066;-webkit-text-stroke:0.25px #5d6066;left:1267.38px;top:570.00px;transform:scaleX(1.0193);transform-origin:0 0;">325</span>
<span style="font-size:10px;color:#66696e;-webkit-text-stroke:0.18px #66696e;left:1259.94px;top:613.00px;transform:scaleX(1.0689);transform-origin:0 0;">Medium</span>
<span style="font-size:13px;color:#5d6066;-webkit-text-stroke:0.25px #5d6066;left:1317.38px;top:570.00px;transform:scaleX(1.0402);transform-origin:0 0;">319</span>
<span style="font-size:10px;color:#66696e;-webkit-text-stroke:0.18px #66696e;left:1320.08px;top:613.00px;transform:scaleX(0.9867);transform-origin:0 0;">Low</span>
<span style="font-size:14px;color:#70747a;-webkit-text-stroke:0.18px #70747a;left:169.19px;top:734.00px;transform:scaleX(0.9674);transform-origin:0 0;">S3</span>
<span style="font-size:14px;color:#44474c;-webkit-text-stroke:0.18px #44474c;left:398.59px;top:734.00px;transform:scaleX(1.0356);transform-origin:0 0;">1366</span>
<span style="font-size:14px;color:#70747a;-webkit-text-stroke:0.18px #70747a;left:120.85px;top:766.00px;transform:scaleX(1.0345);transform-origin:0 0;">Certificate</span>
<span style="font-size:14px;color:#44474c;-webkit-text-stroke:0.18px #44474c;left:406.32px;top:766.00px;transform:scaleX(1.0283);transform-origin:0 0;">837</span>
<span style="font-size:14px;color:#70747a;-webkit-text-stroke:0.18px #70747a;left:89.78px;top:798.00px;transform:scaleX(1.0353);transform-origin:0 0;">LogMetricFilter</span>
<span style="font-size:14px;color:#44474c;-webkit-text-stroke:0.18px #44474c;left:405.62px;top:798.00px;transform:scaleX(1.0514);transform-origin:0 0;">570</span>
<span style="font-size:14px;color:#70747a;-webkit-text-stroke:0.18px #70747a;left:131.41px;top:831.00px;transform:scaleX(1.0148);transform-origin:0 0;">IAMRole</span>
<span style="font-size:14px;color:#44474c;-webkit-text-stroke:0.18px #44474c;left:405.61px;top:831.00px;transform:scaleX(1.0478);transform-origin:0 0;">564</span>
<span style="font-size:14px;color:#70747a;-webkit-text-stroke:0.18px #70747a;left:96.50px;top:863.00px;transform:scaleX(0.9968);transform-origin:0 0;">SecurityGroup</span>
<span style="font-size:14px;color:#44474c;-webkit-text-stroke:0.18px #44474c;left:405.61px;top:863.00px;transform:scaleX(1.0525);transform-origin:0 0;">505</span>
<span style="font-size:14px;color:#70747a;-webkit-text-stroke:0.18px #70747a;left:137.50px;top:895.00px;transform:scaleX(0.9378);transform-origin:0 0;">Lambda</span>
<span style="font-size:14px;color:#44474c;-webkit-text-stroke:0.18px #44474c;left:406.51px;top:895.00px;transform:scaleX(1.0056);transform-origin:0 0;">404</span>
<span style="font-size:14px;color:#70747a;-webkit-text-stroke:0.18px #70747a;left:163.56px;top:927.00px;transform:scaleX(0.9150);transform-origin:0 0;">Vpc</span>
<span style="font-size:14px;color:#44474c;-webkit-text-stroke:0.18px #44474c;left:406.29px;top:927.00px;transform:scaleX(1.0320);transform-origin:0 0;">230</span>
<span style="font-size:14px;color:#70747a;-webkit-text-stroke:0.18px #70747a;left:164.26px;top:960.00px;transform:scaleX(1.0035);transform-origin:0 0;">Cfn</span>
<span style="font-size:14px;color:#44474c;-webkit-text-stroke:0.18px #44474c;left:406.29px;top:960.00px;transform:scaleX(1.0293);transform-origin:0 0;">218</span>
<span style="font-size:14px;color:#70747a;-webkit-text-stroke:0.18px #70747a;left:154.12px;top:992.00px;transform:scaleX(0.9801);transform-origin:0 0;">Topic</span>
<span style="font-size:14px;color:#44474c;-webkit-text-stroke:0.18px #44474c;left:405.61px;top:992.00px;transform:scaleX(1.0525);transform-origin:0 0;">165</span>
<span style="font-size:14px;color:#70747a;-webkit-text-stroke:0.18px #70747a;left:142.50px;top:1024.00px;transform:scaleX(0.9590);transform-origin:0 0;">Subnet</span>
<span style="font-size:14px;color:#44474c;-webkit-text-stroke:0.18px #44474c;left:405.61px;top:1024.00px;transform:scaleX(1.0547);transform-origin:0 0;">128</span>
<span style="font-size:12px;color:#33363a;letter-spacing:0.5px;-webkit-text-stroke:0.18px #33363a;left:493.99px;top:726.00px;transform:scaleX(0.9198);transform-origin:0 0;">RESOURCE ID</span>
<span style="font-size:12px;color:#33363a;letter-spacing:0.5px;-webkit-text-stroke:0.18px #33363a;left:835.19px;top:726.00px;transform:scaleX(0.9864);transform-origin:0 0;">FINDINGS</span>
<span style="font-size:12px;color:#33363a;letter-spacing:0.5px;-webkit-text-stroke:0.18px #33363a;left:958.75px;top:726.00px;transform:scaleX(0.9595);transform-origin:0 0;">CHECK NAME</span>
<span style="font-size:12px;color:#33363a;letter-spacing:0.5px;-webkit-text-stroke:0.18px #33363a;left:1306.20px;top:726.00px;transform:scaleX(0.9882);transform-origin:0 0;">FINDINGS</span>
<span style="font-size:14px;color:#6e7278;-webkit-text-stroke:0.18px #6e7278;left:494.82px;top:759.00px;transform:scaleX(1.0264);transform-origin:0 0;">840837243531</span>
<span style="font-size:14px;color:#6e7278;-webkit-text-stroke:0.18px #6e7278;left:591.00px;top:759.00px;transform:scaleX(0.9827);transform-origin:0 0;">/us-east-1</span>
<span style="font-size:12px;color:#6e7278;letter-spacing:0.4px;-webkit-text-stroke:0.18px #6e7278;left:495.18px;top:778.00px;transform:scaleX(0.9951);transform-origin:0 0;">AuditManager</span>
<span style="font-size:14px;color:#55585d;-webkit-text-stroke:0.18px #55585d;left:879.53px;top:767.00px;transform:scaleX(1.0096);transform-origin:0 0;">86</span>
<span style="font-size:14px;color:#6e7278;-webkit-text-stroke:0.18px #6e7278;left:494.77px;top:811.00px;transform:scaleX(1.0254);transform-origin:0 0;">989027207244</span>
<span style="font-size:14px;color:#6e7278;-webkit-text-stroke:0.18px #6e7278;left:591.00px;top:811.00px;transform:scaleX(0.9827);transform-origin:0 0;">/us-east-1</span>
<span style="font-size:12px;color:#6e7278;letter-spacing:0.4px;-webkit-text-stroke:0.18px #6e7278;left:495.18px;top:830.00px;transform:scaleX(0.9951);transform-origin:0 0;">AuditManager</span>
<span style="font-size:14px;color:#55585d;-webkit-text-stroke:0.18px #55585d;left:879.53px;top:819.00px;transform:scaleX(1.0096);transform-origin:0 0;">86</span>
<span style="font-size:14px;color:#6e7278;-webkit-text-stroke:0.18px #6e7278;left:494.84px;top:864.00px;transform:scaleX(0.9774);transform-origin:0 0;">arn:</span>
<span style="font-size:14px;color:#6e7278;-webkit-text-stroke:0.18px #6e7278;left:518.95px;top:864.00px;transform:scaleX(0.9219);transform-origin:0 0;">aws:</span>
<span style="font-size:14px;color:#6e7278;-webkit-text-stroke:0.18px #6e7278;left:545.36px;top:864.00px;transform:scaleX(0.9510);transform-origin:0 0;">sagemaker:</span>
<span style="font-size:14px;color:#6e7278;-webkit-text-stroke:0.18px #6e7278;left:614.31px;top:864.00px;transform:scaleX(0.9848);transform-origin:0 0;">us-east-1:</span>
<span style="font-size:14px;color:#6e7278;-webkit-text-stroke:0.18px #6e7278;left:675.72px;top:864.00px;transform:scaleX(1.0266);transform-origin:0 0;">881409242370:</span>
<span style="font-size:14px;color:#6e7278;-webkit-text-stroke:0.18px #6e7278;left:774.70px;top:864.00px;transform:scaleX(1.0042);transform-origin:0 0;">noteboo...</span>
<span style="font-size:12px;color:#6e7278;letter-spacing:0.4px;-webkit-text-stroke:0.18px #6e7278;left:494.20px;top:882.00px;transform:scaleX(0.9984);transform-origin:0 0;">NotebookInstance</span>
<span style="font-size:14px;color:#55585d;-webkit-text-stroke:0.18px #55585d;left:887.30px;top:871.00px;transform:scaleX(0.9836);transform-origin:0 0;">2</span>
<span style="font-size:14px;color:#6e7278;-webkit-text-stroke:0.18px #6e7278;left:494.84px;top:916.00px;transform:scaleX(0.9774);transform-origin:0 0;">arn:</span>
<span style="font-size:14px;color:#6e7278;-webkit-text-stroke:0.18px #6e7278;left:518.95px;top:916.00px;transform:scaleX(0.9219);transform-origin:0 0;">aws:</span>
<span style="font-size:14px;color:#6e7278;-webkit-text-stroke:0.18px #6e7278;left:545.36px;top:916.00px;transform:scaleX(0.9510);transform-origin:0 0;">sagemaker:</span>
<span style="font-size:14px;color:#6e7278;-webkit-text-stroke:0.18px #6e7278;left:614.31px;top:916.00px;transform:scaleX(0.9848);transform-origin:0 0;">us-east-1:</span>
<span style="font-size:14px;color:#6e7278;-webkit-text-stroke:0.18px #6e7278;left:675.72px;top:916.00px;transform:scaleX(1.0266);transform-origin:0 0;">881409242370:</span>
<span style="font-size:14px;color:#6e7278;-webkit-text-stroke:0.18px #6e7278;left:774.70px;top:916.00px;transform:scaleX(0.9829);transform-origin:0 0;">model/S...</span>
<span style="font-size:12px;color:#6e7278;letter-spacing:0.4px;-webkit-text-stroke:0.18px #6e7278;left:494.20px;top:934.00px;transform:scaleX(0.9723);transform-origin:0 0;">SagemakerModel</span>
<span style="font-size:14px;color:#55585d;-webkit-text-stroke:0.18px #55585d;left:887.94px;top:923.00px;transform:scaleX(0.9104);transform-origin:0 0;">1</span>
<span style="font-size:14px;color:#6e7278;-webkit-text-stroke:0.18px #6e7278;left:494.82px;top:968.00px;transform:scaleX(1.0291);transform-origin:0 0;">840837243531</span>
<span style="font-size:12px;color:#6e7278;letter-spacing:0.4px;-webkit-text-stroke:0.18px #6e7278;left:495.18px;top:987.00px;transform:scaleX(0.9804);transform-origin:0 0;">Account</span>
<span style="font-size:14px;color:#55585d;-webkit-text-stroke:0.18px #55585d;left:879.60px;top:975.00px;transform:scaleX(1.0001);transform-origin:0 0;">24</span>
<span style="font-size:14px;color:#6e7278;-webkit-text-stroke:0.18px #6e7278;left:958.97px;top:767.00px;transform:scaleX(0.9722);transform-origin:0 0;">Configure</span>
<span style="font-size:14px;color:#6e7278;-webkit-text-stroke:0.18px #6e7278;left:1020.99px;top:767.00px;transform:scaleX(0.9674);transform-origin:0 0;">S3</span>
<span style="font-size:14px;color:#6e7278;-webkit-text-stroke:0.18px #6e7278;left:1040.01px;top:767.00px;transform:scaleX(1.0200);transform-origin:0 0;">Intelligent-Tiering</span>
<span style="font-size:14px;color:#55585d;-webkit-text-stroke:0.18px #55585d;left:1342.59px;top:767.00px;transform:scaleX(1.0079);transform-origin:0 0;">240</span>
<span style="font-size:14px;color:#6e7278;-webkit-text-stroke:0.18px #6e7278;left:958.50px;top:821.00px;transform:scaleX(0.9441);transform-origin:0 0;">Enable</span>
<span style="font-size:14px;color:#6e7278;-webkit-text-stroke:0.18px #6e7278;left:1002.30px;top:821.00px;transform:scaleX(0.9500);transform-origin:0 0;">SageMaker</span>
<span style="font-size:14px;color:#6e7278;-webkit-text-stroke:0.18px #6e7278;left:1073.29px;top:821.00px;transform:scaleX(1.0048);transform-origin:0 0;">model</span>
<span style="font-size:14px;color:#6e7278;-webkit-text-stroke:0.18px #6e7278;left:1113.21px;top:821.00px;transform:scaleX(1.0684);transform-origin:0 0;">network</span>
<span style="font-size:14px;color:#6e7278;-webkit-text-stroke:0.18px #6e7278;left:1168.10px;top:821.00px;transform:scaleX(1.0169);transform-origin:0 0;">isolation</span>
<span style="font-size:14px;color:#55585d;-webkit-text-stroke:0.18px #55585d;left:1359.34px;top:821.00px;transform:scaleX(0.9104);transform-origin:0 0;">1</span>
<span style="font-size:14px;color:#6e7278;-webkit-text-stroke:0.18px #6e7278;left:958.62px;top:875.00px;transform:scaleX(0.9524);transform-origin:0 0;">Use</span>
<span style="font-size:14px;color:#6e7278;-webkit-text-stroke:0.18px #6e7278;left:985.78px;top:875.00px;transform:scaleX(0.9629);transform-origin:0 0;">Amazon</span>
<span style="font-size:14px;color:#6e7278;-webkit-text-stroke:0.18px #6e7278;left:1037.38px;top:875.00px;transform:scaleX(0.9284);transform-origin:0 0;">S3</span>
<span style="font-size:14px;color:#6e7278;-webkit-text-stroke:0.18px #6e7278;left:1055.41px;top:875.00px;transform:scaleX(1.0157);transform-origin:0 0;">Inventory</span>
<span style="font-size:14px;color:#55585d;-webkit-text-stroke:0.18px #55585d;left:1342.90px;top:875.00px;transform:scaleX(1.0646);transform-origin:0 0;">112</span>
<span style="font-size:14px;color:#6e7278;-webkit-text-stroke:0.18px #6e7278;left:958.60px;top:918.00px;transform:scaleX(0.9610);transform-origin:0 0;">Ensure</span>
<span style="font-size:14px;color:#6e7278;-webkit-text-stroke:0.18px #6e7278;left:1004.30px;top:918.00px;transform:scaleX(1.0145);transform-origin:0 0;">that</span>
<span style="font-size:14px;color:#6e7278;-webkit-text-stroke:0.18px #6e7278;left:1031.98px;top:918.00px;transform:scaleX(0.9629);transform-origin:0 0;">Amazon</span>
<span style="font-size:14px;color:#6e7278;-webkit-text-stroke:0.18px #6e7278;left:1083.70px;top:918.00px;transform:scaleX(0.9436);transform-origin:0 0;">SageMaker</span>
<span style="font-size:14px;color:#6e7278;-webkit-text-stroke:0.18px #6e7278;left:1154.60px;top:918.00px;transform:scaleX(1.0151);transform-origin:0 0;">notebook</span>
<span style="font-size:14px;color:#55585d;-webkit-text-stroke:0.18px #55585d;left:1359.34px;top:929.00px;transform:scaleX(0.9104);transform-origin:0 0;">1</span>
<span style="font-size:14px;color:#6e7278;-webkit-text-stroke:0.18px #6e7278;left:958.58px;top:982.00px;transform:scaleX(0.9284);transform-origin:0 0;">S3</span>
<span style="font-size:14px;color:#6e7278;-webkit-text-stroke:0.18px #6e7278;left:976.71px;top:982.00px;transform:scaleX(0.9757);transform-origin:0 0;">bucket</span>
<span style="font-size:14px;color:#6e7278;-webkit-text-stroke:0.18px #6e7278;left:1020.38px;top:982.00px;transform:scaleX(0.9914);transform-origin:0 0;">must</span>
<span style="font-size:14px;color:#6e7278;-webkit-text-stroke:0.18px #6e7278;left:1053.40px;top:982.00px;transform:scaleX(0.9181);transform-origin:0 0;">have</span>
<span style="font-size:14px;color:#6e7278;-webkit-text-stroke:0.18px #6e7278;left:1085.28px;top:982.00px;transform:scaleX(0.9797);transform-origin:0 0;">versioning</span>
<span style="font-size:14px;color:#6e7278;-webkit-text-stroke:0.18px #6e7278;left:1151.13px;top:982.00px;transform:scaleX(0.9721);transform-origin:0 0;">enabled</span>
<span style="font-size:14px;color:#55585d;-webkit-text-stroke:0.18px #55585d;left:1342.90px;top:982.00px;transform:scaleX(1.0616);transform-origin:0 0;">110</span>
<span style="font-size:14px;color:#6e7278;-webkit-text-stroke:0.18px #6e7278;left:958.59px;top:938.00px;transform:scaleX(0.9634);transform-origin:0 0;">instances</span>
<span style="font-size:14px;color:#6e7278;-webkit-text-stroke:0.18px #6e7278;left:1019.05px;top:938.00px;transform:scaleX(0.9411);transform-origin:0 0;">are</span>
<span style="font-size:14px;color:#6e7278;-webkit-text-stroke:0.18px #6e7278;left:1040.60px;top:938.00px;transform:scaleX(1.0180);transform-origin:0 0;">running</span>
<span style="font-size:14px;color:#6e7278;-webkit-text-stroke:0.18px #6e7278;left:1090.70px;top:938.00px;transform:scaleX(0.9772);transform-origin:0 0;">inside</span>
<span style="font-size:14px;color:#6e7278;-webkit-text-stroke:0.18px #6e7278;left:1128.95px;top:938.00px;transform:scaleX(0.9000);transform-origin:0 0;">a</span>
<span style="font-size:14px;color:#6e7278;-webkit-text-stroke:0.18px #6e7278;left:1139.15px;top:938.00px;transform:scaleX(1.0594);transform-origin:0 0;">Virtual</span>
<span style="font-size:14px;color:#6e7278;-webkit-text-stroke:0.18px #6e7278;left:1183.41px;top:938.00px;transform:scaleX(0.9974);transform-origin:0 0;">Private...</span>
</div></body></html>
